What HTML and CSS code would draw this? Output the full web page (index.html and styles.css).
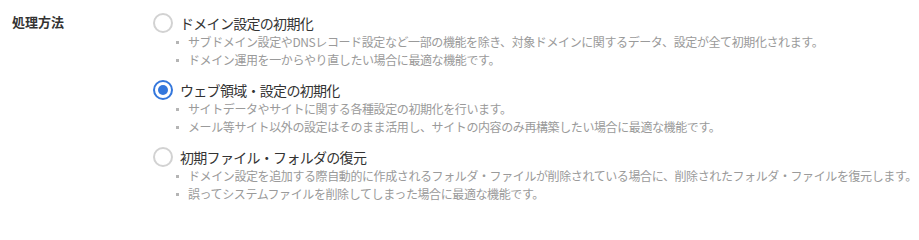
FILE: index.html
```html
<!DOCTYPE html>
<html lang="ja">
<head>
<meta charset="utf-8">
<link rel="stylesheet" href="styles.css">
</head>
<body>
<div class="field">
  <div class="label">処理方法</div>
  <div class="options">
    <div class="option">
      <div class="opt-head"><span class="radio"></span><span class="title">ドメイン設定の初期化</span></div>
      <ul class="notes">
        <li>サブドメイン設定やDNSレコード設定など一部の機能を除き、対象ドメインに関するデータ、設定が全て初期化されます。</li>
        <li>ドメイン運用を一からやり直したい場合に最適な機能です。</li>
      </ul>
    </div>
    <div class="option">
      <div class="opt-head"><span class="radio checked"></span><span class="title">ウェブ領域・設定の初期化</span></div>
      <ul class="notes">
        <li>サイトデータやサイトに関する各種設定の初期化を行います。</li>
        <li>メール等サイト以外の設定はそのまま活用し、サイトの内容のみ再構築したい場合に最適な機能です。</li>
      </ul>
    </div>
    <div class="option">
      <div class="opt-head"><span class="radio"></span><span class="title">初期ファイル・フォルダの復元</span></div>
      <ul class="notes">
        <li>ドメイン設定を追加する際自動的に作成されるフォルダ・ファイルが削除されている場合に、削除されたフォルダ・ファイルを復元します。</li>
        <li>誤ってシステムファイルを削除してしまった場合に最適な機能です。</li>
      </ul>
    </div>
  </div>
</div>
</body>
</html>
```
FILE: styles.css
```css
html, body {
  margin: 0;
  padding: 0;
  background: #fff;
}
body {
  font-family: "Noto Sans CJK JP", "Noto Sans", sans-serif;
  color: #333;
}
.field {
  display: flex;
  padding: 12px 0 0 12px;
}
.label {
  flex: none;
  width: 141px;
  font-size: 13px;
  font-weight: bold;
  line-height: 20px;
  color: #333;
}
.options {
  display: flex;
  flex-direction: column;
}
.option {
  margin-bottom: 10px;
}
.opt-head {
  display: flex;
  align-items: center;
  height: 21px;
}
.radio {
  box-sizing: border-box;
  width: 20px;
  height: 20px;
  border: 2px solid #d2d2d2;
  border-radius: 50%;
  margin-right: 7px;
  position: relative;
  flex: none;
}
.radio.checked {
  border-color: #3477dc;
}
.radio.checked::after {
  content: "";
  position: absolute;
  left: 3px;
  top: 3px;
  width: 10px;
  height: 10px;
  border-radius: 50%;
  background: #3477dc;
}
.title {
  font-size: 14px;
  letter-spacing: -0.7px;
  color: #333;
}
.notes {
  list-style: none;
  margin: 0;
  padding: 0 0 0 35px;
}
.notes li {
  position: relative;
  font-size: 12px;
  line-height: 18px;
  color: #9a9a9a;
  letter-spacing: -0.4px;
  white-space: nowrap;
}
.notes li::before {
  content: "";
  position: absolute;
  left: -12px;
  top: 8px;
  width: 3px;
  height: 3px;
  background: #b5b5b5;
}
```
